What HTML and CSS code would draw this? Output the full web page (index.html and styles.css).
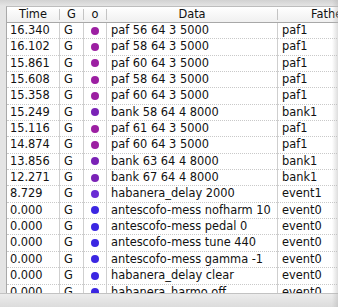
FILE: index.html
```html
<!DOCTYPE html>
<html lang="en">
<head>
    <meta charset="UTF-8">
    <title>Trace</title>
<link rel="stylesheet" href="styles.css">
</head>
<body>
<div class="wrap">
    <div class="table">
        <div class="head">
            <div class="th">Time</div>
            <div class="th">G</div>
            <div class="th">o</div>
            <div class="th">Data</div>
            <div class="th">Father</div>
        </div>
        <div class="rows">
            <div class="row"><span>16.340</span><span>G</span><span><i class="dot paf"></i></span><span>paf 56 64 3 5000</span><span>paf1</span></div>
            <div class="row"><span>16.102</span><span>G</span><span><i class="dot paf"></i></span><span>paf 58 64 3 5000</span><span>paf1</span></div>
            <div class="row"><span>15.861</span><span>G</span><span><i class="dot paf"></i></span><span>paf 60 64 3 5000</span><span>paf1</span></div>
            <div class="row"><span>15.608</span><span>G</span><span><i class="dot paf"></i></span><span>paf 58 64 3 5000</span><span>paf1</span></div>
            <div class="row"><span>15.358</span><span>G</span><span><i class="dot paf"></i></span><span>paf 60 64 3 5000</span><span>paf1</span></div>
            <div class="row"><span>15.249</span><span>G</span><span><i class="dot bank"></i></span><span>bank 58 64 4 8000</span><span>bank1</span></div>
            <div class="row"><span>15.116</span><span>G</span><span><i class="dot paf"></i></span><span>paf 61 64 3 5000</span><span>paf1</span></div>
            <div class="row"><span>14.874</span><span>G</span><span><i class="dot paf"></i></span><span>paf 60 64 3 5000</span><span>paf1</span></div>
            <div class="row"><span>13.856</span><span>G</span><span><i class="dot bank"></i></span><span>bank 63 64 4 8000</span><span>bank1</span></div>
            <div class="row"><span>12.271</span><span>G</span><span><i class="dot bank"></i></span><span>bank 67 64 4 8000</span><span>bank1</span></div>
            <div class="row"><span>8.729</span><span>G</span><span><i class="dot hab"></i></span><span>habanera_delay 2000</span><span>event1</span></div>
            <div class="row"><span>0.000</span><span>G</span><span><i class="dot ant"></i></span><span>antescofo-mess nofharm 10</span><span>event0</span></div>
            <div class="row"><span>0.000</span><span>G</span><span><i class="dot ant"></i></span><span>antescofo-mess pedal 0</span><span>event0</span></div>
            <div class="row"><span>0.000</span><span>G</span><span><i class="dot ant"></i></span><span>antescofo-mess tune 440</span><span>event0</span></div>
            <div class="row"><span>0.000</span><span>G</span><span><i class="dot ant"></i></span><span>antescofo-mess gamma -1</span><span>event0</span></div>
            <div class="row"><span>0.000</span><span>G</span><span><i class="dot ant"></i></span><span>habanera_delay clear</span><span>event0</span></div>
            <div class="row"><span>0.000</span><span>G</span><span><i class="dot ant"></i></span><span>habanera_harmo off</span><span>event0</span></div>
        </div>
    </div>
    <div class="foot"></div>
    <div class="edge"></div>
</div>
</body>
</html>
```

FILE: styles.css
```css
html, body {margin: 0; padding: 0;}
body {width: 338px; height: 307px; overflow: hidden; background: #e4e4e4; font-family: "DejaVu Sans", sans-serif; font-size: 11.4px; color: #111;}
.wrap {position: relative; display: flex; flex-direction: column; height: 307px; padding-top: 6px; box-sizing: border-box; background: linear-gradient(#d2d2d2, #e4e4e4 6px);}
.table {width: 420px; height: 286px; margin-left: 6px; border-left: 1px solid #a9a9a9; border-top: 1px solid #bdbdbd; background: #fff; overflow: hidden; flex: none;}

.head, .row {display: grid; grid-template-columns: 52px 23px 22px 170px 150px; column-gap: 1px;}
.head {height: 15px; border-bottom: 1px solid #a8a8a8; background: linear-gradient(#ffffff, #f0f0f0);}
.th {position: relative; text-align: center; line-height: 15px; color: #111;}
.th:after {content: ''; position: absolute; right: -1px; top: 2px; bottom: 2px; width: 1px; background: #c4c4c4;}
.th:last-child {text-align: left; padding-left: 33px;}

.rows {background: linear-gradient(to right, transparent 52px, #cfcfcf 52px, #cfcfcf 53px, transparent 53px, transparent 76px, #cfcfcf 76px, #cfcfcf 77px, transparent 77px, transparent 99px, #cfcfcf 99px, #cfcfcf 100px, transparent 100px, transparent 270px, #cfcfcf 270px, #cfcfcf 271px, transparent 271px);}
.row {height: 15.35px; border-bottom: 1px dotted #c9c9c9; line-height: 15px;}
.row span {padding-left: 4px; white-space: nowrap; overflow: hidden;}
.row span:first-child {padding-left: 3px;}
.row span:nth-child(3) {padding-left: 0; display: flex; align-items: center; justify-content: center;}

.dot {display: block; width: 8px; height: 8px; border-radius: 50%;}
.dot.paf {background: #9c1fa2;}
.dot.bank {background: #7a22b6;}
.dot.hab {background: #6a2bd4;}
.dot.ant {background: #3b26e2;}

.foot {flex: 1; border-top: 1px solid #c2c2c2; background: linear-gradient(#ececec, #dcdcdc);}
.edge {position: absolute; top: 0; right: 0; bottom: 0; width: 6px; background: linear-gradient(to right, rgba(200,200,200,0), rgba(180,180,180,0.45));}
```
